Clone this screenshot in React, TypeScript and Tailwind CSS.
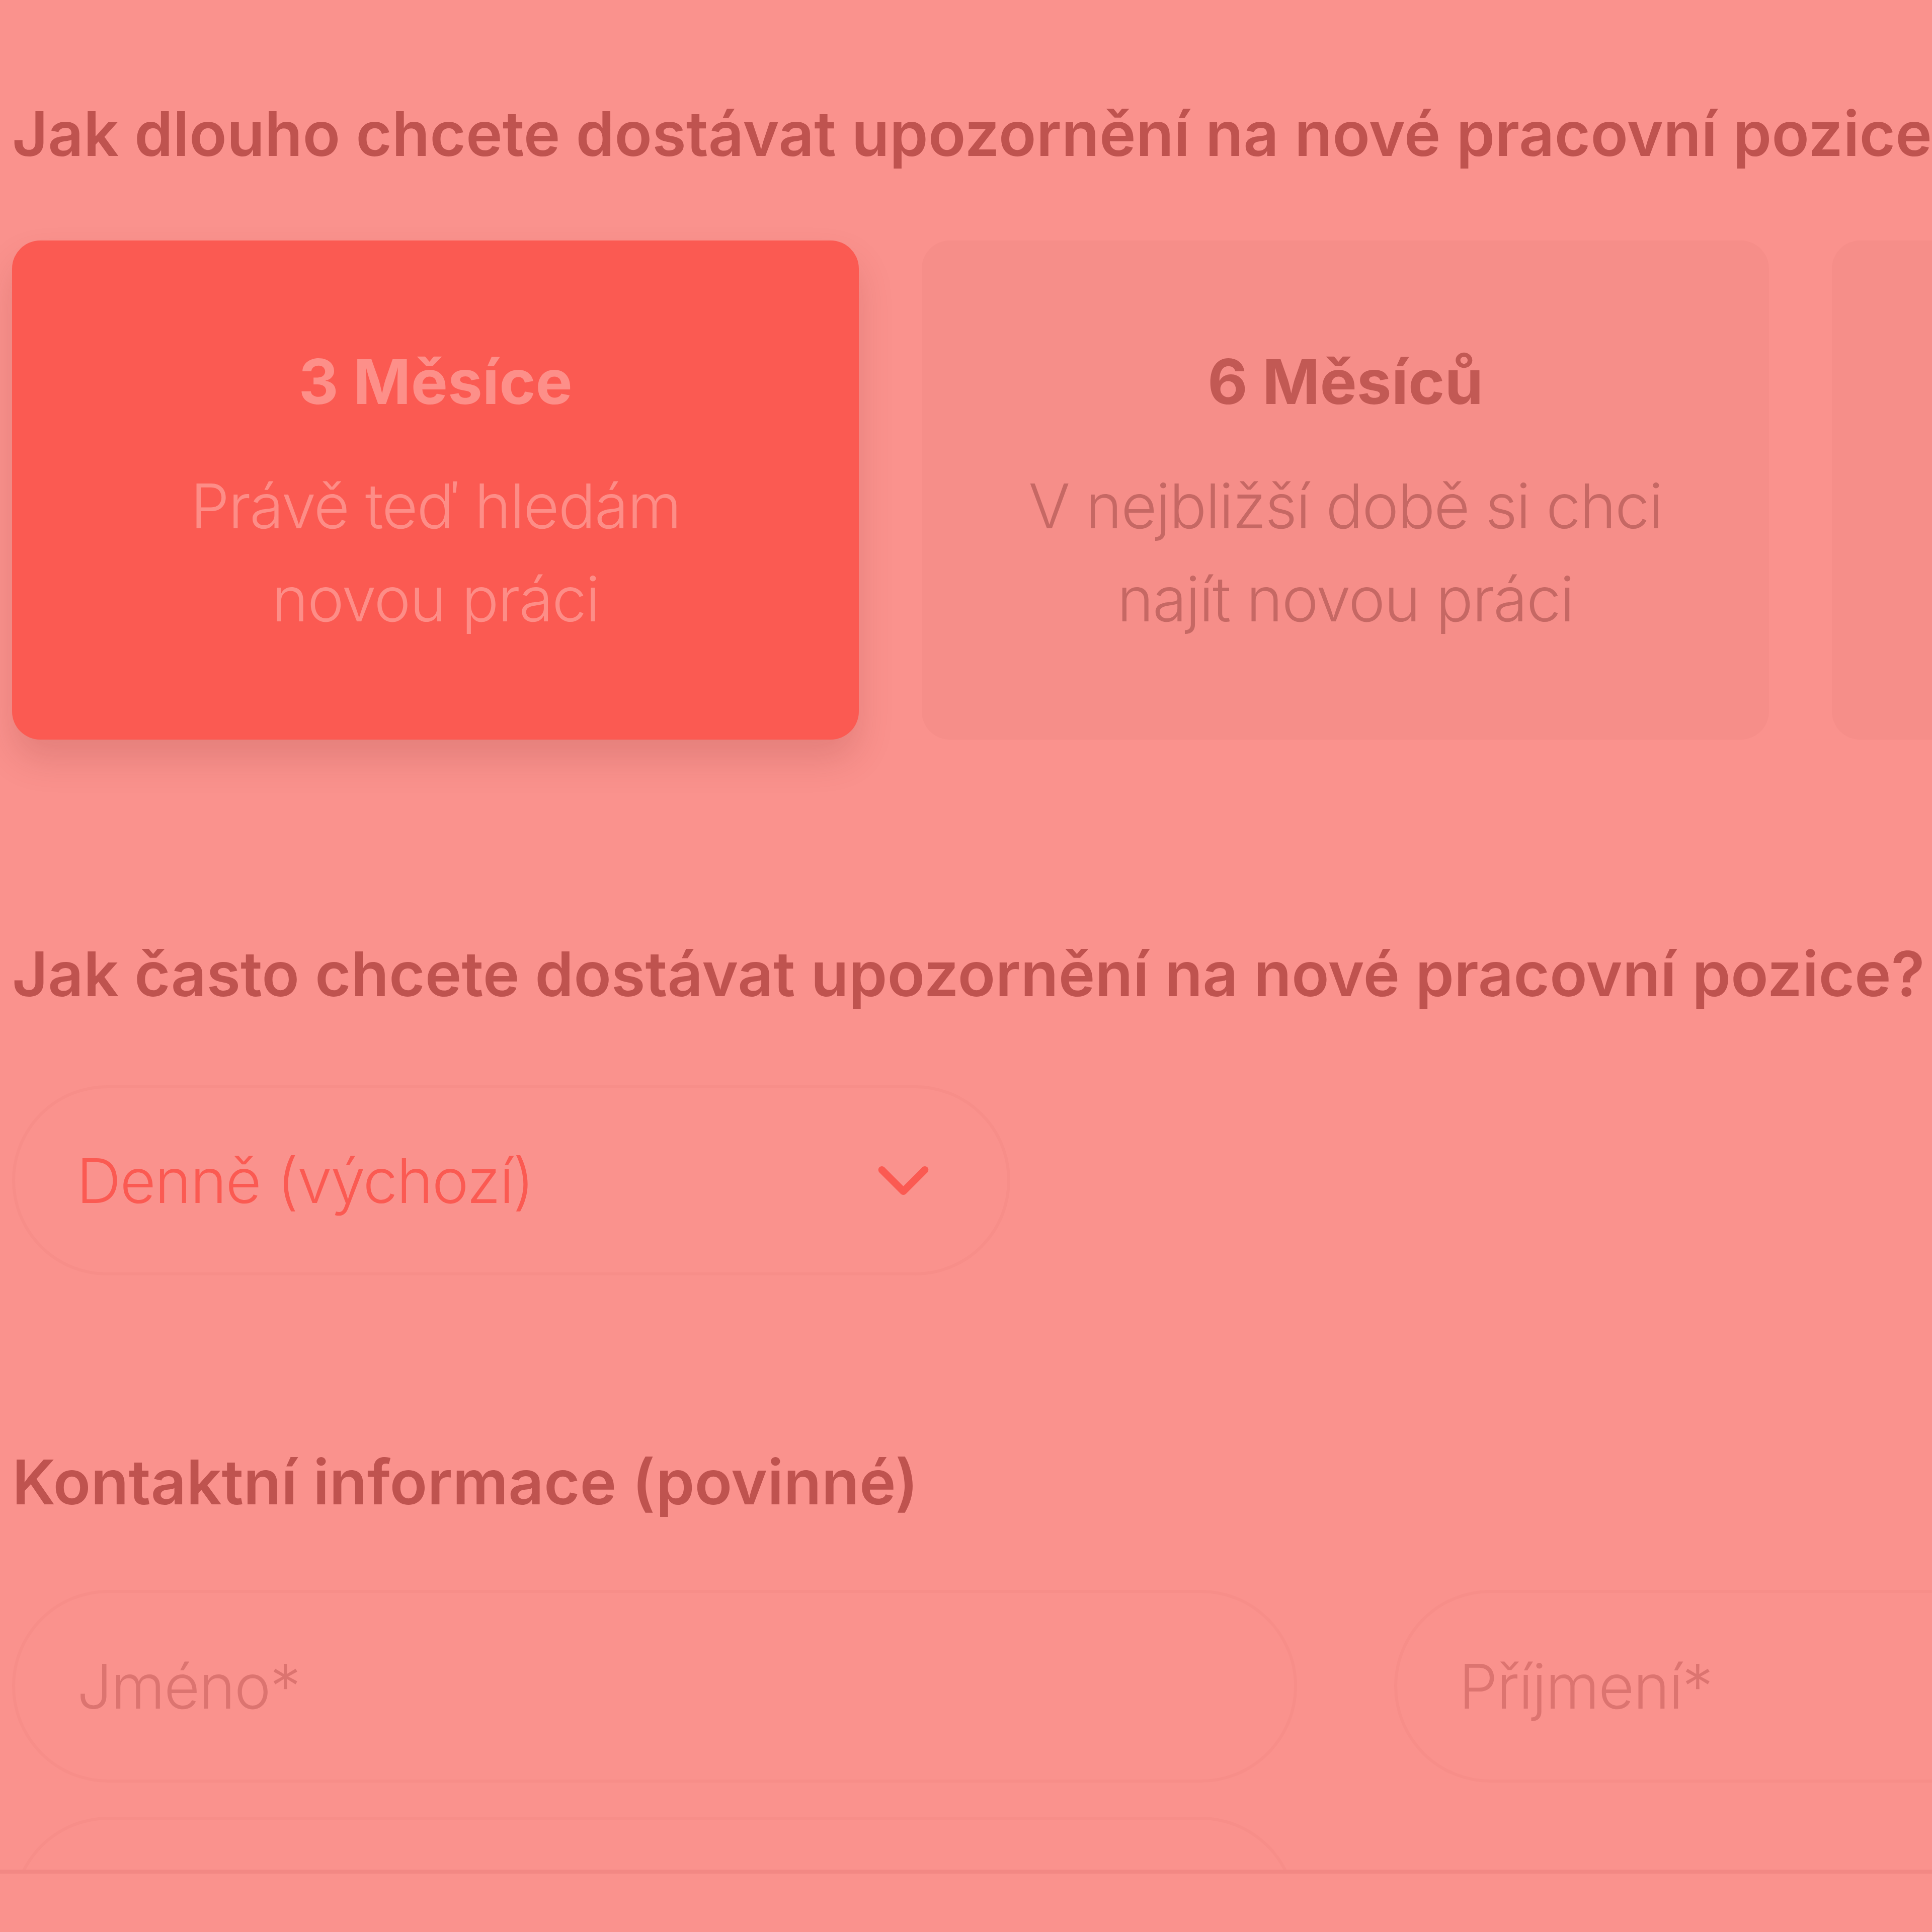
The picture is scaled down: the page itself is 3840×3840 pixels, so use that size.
import React from 'react';
import { ChevronDown } from 'lucide-react';

interface DurationOption {
  id: string;
  title: string;
  lines: string[];
}

const durations: DurationOption[] = [
  { id: '3m', title: '3 Měsíce', lines: ['Právě teď hledám', 'novou práci'] },
  { id: '6m', title: '6 Měsíců', lines: ['V nejbližší době si chci', 'najít novou práci'] },
  { id: '12m', title: '12 Měsíců', lines: ['Zatím se jen', 'rozhlížím'] },
];

function DurationCard({ option, selected }: { option: DurationOption; selected: boolean }) {
  return (
    <div
      className={
        selected
          ? 'flex h-[992px] flex-col items-center justify-center rounded-[56px] bg-[#fb5a52] text-center shadow-[0_40px_70px_rgba(120,30,30,0.16)]'
          : 'flex h-[992px] flex-col items-center justify-center rounded-[56px] bg-[#f68e89] text-center'
      }
    >
      <div
        className={
          selected
            ? 'text-[123px] font-bold leading-[185px] text-[#fd8f89]'
            : 'text-[123px] font-bold leading-[185px] text-[#c25954]'
        }
      >
        {option.title}
      </div>
      <div
        className={
          selected
            ? 'mt-[62px] text-[123px] font-light leading-[185px] tracking-[-2px] text-[#fd8d87]'
            : 'mt-[62px] text-[123px] font-light leading-[185px] tracking-[-2px] text-[#c66864]'
        }
      >
        {option.lines.map((line) => (
          <div key={line} className="whitespace-nowrap">
            {line}
          </div>
        ))}
      </div>
    </div>
  );
}

export default function App() {
  return (
    <div className="relative h-[3840px] w-[3840px] overflow-hidden bg-[#fa928d] font-['Inter',sans-serif]">
      <div className="ml-[24px] w-[5300px] pt-[173px]">
        {/* Duration */}
        <h2 className="whitespace-nowrap text-[123px] font-semibold leading-[185px] text-[#bf534f]">
          Jak dlouho chcete dostávat upozornění na nové pracovní pozice?
        </h2>
        <div className="mt-[120px] grid grid-cols-3 gap-[125px]">
          {durations.map((d, i) => (
            <DurationCard key={d.id} option={d} selected={i === 0} />
          ))}
        </div>

        {/* Frequency */}
        <h2 className="mt-[373px] whitespace-nowrap text-[123px] font-semibold leading-[185px] text-[#bf534f]">
          Jak často chcete dostávat upozornění na nové pracovní pozice?
        </h2>
        <div className="mt-[129px] flex h-[378px] w-[1984px] items-center justify-between rounded-full border-[6px] border-[#f78e89] pl-[122px] pr-[121px]">
          <span className="text-[123px] font-light leading-[185px] tracking-[-2px] text-[#fb5a52]">Denně (výchozí)</span>
          <ChevronDown size={171} strokeWidth={2} className="text-[#fb5a52]" />
        </div>

        {/* Contact */}
        <h2 className="mt-[318px] whitespace-nowrap text-[123px] font-semibold leading-[185px] text-[#bf534f]">
          Kontaktní informace (povinné)
        </h2>
        <div className="mt-[122px] grid grid-cols-2 gap-x-[193px] gap-y-[68px]">
          <div className="flex h-[383px] items-center rounded-full border-[6px] border-[#f78e89] px-[123px]">
            <span className="text-[123px] font-light leading-[185px] tracking-[-2px] text-[#dc7470]">Jméno*</span>
          </div>
          <div className="flex h-[383px] items-center rounded-full border-[6px] border-[#f78e89] px-[123px]">
            <span className="text-[123px] font-light leading-[185px] tracking-[-2px] text-[#dc7470]">Příjmení*</span>
          </div>
          <div className="flex h-[383px] items-center rounded-full border-[6px] border-[#f78e89] px-[123px]">
            <span className="text-[123px] font-light leading-[185px] tracking-[-2px] text-[#dc7470]">E-mail*</span>
          </div>
        </div>
      </div>

      {/* Sticky footer */}
      <div className="absolute bottom-0 left-0 right-0 h-[124px] border-t-[8px] border-[#f28884] bg-[#fa928d]" />
    </div>
  );
}
